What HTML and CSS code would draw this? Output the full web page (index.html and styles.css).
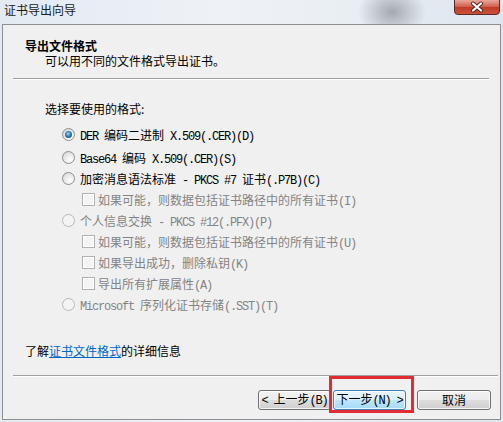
FILE: index.html
```html
<!DOCTYPE html>
<html lang="zh-CN">
<head>
    <meta charset="UTF-8">
    <title>证书导出向导</title>
    <link rel="stylesheet" href="styles.css">
</head>
<body>
    <div class="window">
        <!-- 标题栏 -->
        <div class="titlebar">
            <span class="title">证书导出向导</span>
            <span class="close-btn">
                <svg width="46" height="15" viewBox="0 0 46 15">
                    <defs>
                        <linearGradient id="closeBg" x1="0" y1="0" x2="0" y2="1">
                            <stop offset="0" stop-color="#e9a89b"/>
                            <stop offset="0.45" stop-color="#d2604f"/>
                            <stop offset="0.5" stop-color="#c23a28"/>
                            <stop offset="1" stop-color="#c9533c"/>
                        </linearGradient>
                    </defs>
                    <path d="M0.5 0 V11 Q0.5 14.5 4 14.5 H42 Q45.5 14.5 45.5 11 V0" fill="url(#closeBg)" stroke="#5a2a26"/>
                    <path d="M19 3.5 L27 10.5 M27 3.5 L19 10.5" stroke="#4a2320" stroke-width="4" stroke-linecap="round"/>
                    <path d="M19 3.5 L27 10.5 M27 3.5 L19 10.5" stroke="#ffffff" stroke-width="2.2" stroke-linecap="round"/>
                </svg>
            </span>
        </div>

        <!-- 客户区 -->
        <div class="client">
            <div class="header">
                <div class="header-title">导出文件格式</div>
                <div class="header-sub">可以用不同的文件格式导出证书。</div>
            </div>
            <div class="sep sep-top"></div>

            <div class="prompt">选择要使用的格式:</div>
            <div class="options">
                <div class="opt first">
                    <span class="radio checked"></span>
                    <span class="label"><span class="en">DER </span>编码二进制<span class="en"> X.509(.CER)(D)</span></span>
                </div>
                <div class="opt">
                    <span class="radio"></span>
                    <span class="label"><span class="en">Base64 </span>编码<span class="en"> X.509(.CER)(S)</span></span>
                </div>
                <div class="opt">
                    <span class="radio"></span>
                    <span class="label">加密消息语法标准<span class="en"> - PKCS #7 </span>证书<span class="en">(.P7B)(C)</span></span>
                </div>
                <div class="opt sub disabled">
                    <span class="check"></span>
                    <span class="label">如果可能，则数据包括证书路径中的所有证书<span class="en">(I)</span></span>
                </div>
                <div class="opt disabled">
                    <span class="radio"></span>
                    <span class="label">个人信息交换<span class="en"> - PKCS #12(.PFX)(P)</span></span>
                </div>
                <div class="opt sub disabled">
                    <span class="check"></span>
                    <span class="label">如果可能，则数据包括证书路径中的所有证书<span class="en">(U)</span></span>
                </div>
                <div class="opt sub disabled">
                    <span class="check"></span>
                    <span class="label">如果导出成功，删除私钥<span class="en">(K)</span></span>
                </div>
                <div class="opt sub disabled">
                    <span class="check"></span>
                    <span class="label">导出所有扩展属性<span class="en">(A)</span></span>
                </div>
                <div class="opt disabled">
                    <span class="radio"></span>
                    <span class="label"><span class="en">Microsoft </span>序列化证书存储<span class="en">(.SST)(T)</span></span>
                </div>
            </div>

            <div class="more">了解<a href="#">证书文件格式</a>的详细信息</div>
            <div class="sep sep-bottom"></div>

            <div class="buttons">
                <button class="btn"><span class="en">&lt; </span>上一步<span class="en">(B)</span></button>
                <span class="focus-wrap">
                    <button class="btn default">下一步<span class="en">(N) &gt;</span></button>
                    <span class="highlight"></span>
                </span>
                <button class="btn cancel">取消</button>
            </div>
        </div>
    </div>
</body>
</html>
```

FILE: styles.css
```css
* {
    margin: 0;
    padding: 0;
    box-sizing: border-box;
}

body {
    font-family: "Noto Sans CJK SC", "Microsoft YaHei", sans-serif;
    font-size: 12px;
    color: #000;
    background: #dfe6ee;
}

.window {
    width: 503px;
    height: 422px;
    padding: 0 2px 2px 2px;
    background:
        radial-gradient(ellipse 34px 26px at 392px 12px, rgba(110, 115, 122, 0.55), rgba(110, 115, 122, 0) 100%),
        linear-gradient(to right, #e3eaf2 0%, #eef2f7 45%, #e9eef4 70%, #dde5ee 100%);
}

/* 标题栏 */
.titlebar {
    height: 24px;
    display: flex;
    justify-content: space-between;
    align-items: flex-start;
    margin: 0 -2px;
    padding: 0 3px 0 4px;
}

.title {
    line-height: 18px;
    padding-top: 1px;
    color: #1a1a1a;
}

.close-btn {
    display: block;
    height: 15px;
}

.close-btn svg {
    display: block;
}

/* 客户区 */
.client {
    height: 396px;
    background: #f0f0f0;
    border: 1px solid #8c8e90;
}

.header {
    padding: 13px 0 0 22px;
    line-height: 15px;
}

.header-title {
    font-weight: bold;
}

.header-sub {
    padding-left: 20px;
}

.sep {
    height: 2px;
    border-top: 1px solid #a0a0a0;
    border-bottom: 1px solid #ffffff;
}

.sep-top {
    margin: 10px 11px 0 10px;
}

.sep-bottom {
    margin: 17px 2px 0 10px;
}

.prompt {
    margin-top: 21px;
    padding-left: 42px;
    line-height: 15px;
}

.options {
    margin-top: 8px;
    padding-left: 59px;
}

.opt {
    height: 21px;
    display: flex;
    align-items: center;
    gap: 5px;
}

.opt.first {
    margin-bottom: 2px;
}

.opt.sub {
    padding-left: 20px;
    gap: 3px;
}

.opt.disabled {
    color: #838383;
}

.en {
    font-family: "Liberation Mono", "DejaVu Sans Mono", monospace;
    font-size: 12px;
    letter-spacing: -1.2px;
    white-space: pre;
}

.radio {
    width: 13px;
    height: 13px;
    border-radius: 50%;
    border: 1px solid #8e8f8f;
    background: radial-gradient(circle at 65% 70%, #ffffff 0%, #f0f0f0 35%, #cfd0d1 100%);
    display: flex;
    justify-content: center;
    align-items: center;
    flex-shrink: 0;
}

.radio.checked::after {
    content: "";
    width: 7px;
    height: 7px;
    border-radius: 50%;
    background: radial-gradient(circle at 45% 40%, #a7dbf7 0%, #3a86c0 40%, #1c4e7e 75%, #173c63 100%);
}

.opt.disabled .radio {
    border-color: #b8b8b8;
    background: #f4f4f4;
}

.check {
    width: 13px;
    height: 13px;
    border: 1px solid #b1b1b1;
    background: #f4f4f4;
    box-shadow: inset 0 0 0 1px #ffffff;
    flex-shrink: 0;
}

.more {
    margin-top: 28px;
    padding-left: 22px;
    line-height: 15px;
}

.more a {
    color: #0066cc;
    text-decoration: underline;
}

/* 按钮 */
.buttons {
    margin-top: 13px;
    display: flex;
    justify-content: flex-end;
    padding-right: 9px;
}

.btn {
    width: 73px;
    height: 20px;
    font-family: "Noto Sans CJK SC", "Microsoft YaHei", sans-serif;
    font-size: 12px;
    line-height: 16px;
    color: #000;
    border: 1px solid #707070;
    border-radius: 3px;
    background: linear-gradient(#f2f2f2 0%, #ebebeb 50%, #dddddd 51%, #cfcfcf 100%);
    box-shadow: inset 0 0 0 1px rgba(255, 255, 255, 0.75);
}

.focus-wrap {
    position: relative;
    margin-left: 2px;
}

.btn.default {
    border-color: #3c7fb1;
    background: linear-gradient(#eaf6fd 0%, #d9f0fc 50%, #bee6fd 51%, #a7d9f5 100%);
}

.highlight {
    position: absolute;
    left: -4px;
    top: -14px;
    right: -8px;
    bottom: -3px;
    border: 3px solid #e32b33;
}

.btn.cancel {
    width: 74px;
    margin-left: 11px;
}
```
